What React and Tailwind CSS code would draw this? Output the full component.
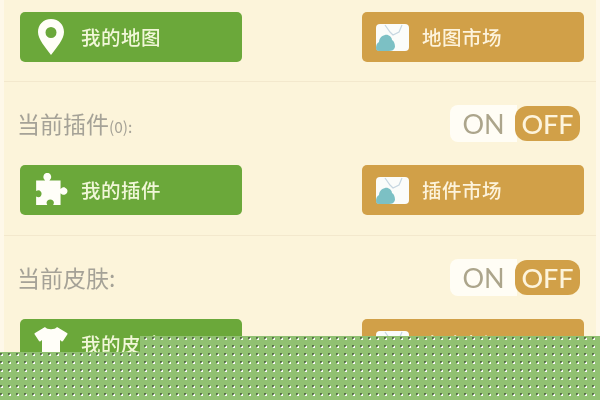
const cjk = "font-['Noto_Sans_CJK_SC','Noto_Sans',sans-serif]";

function Pin() {
  return (
    <svg width="28" height="36" viewBox="0 0 28 36" aria-hidden="true">
      <path fillRule="evenodd" fill="#fffef8" d="M14 0C6 0 1 6 1 13c0 7 7 15 13 23 6-8 13-16 13-23C27 6 22 0 14 0Zm0 8a5.5 5.5 0 1 1 0 11 5.5 5.5 0 0 1 0-11Z" />
    </svg>
  );
}

function Puzzle() {
  return (
    <svg width="34" height="34" viewBox="0 0 32 32" aria-hidden="true">
      <path fill="#fffef8" d="M2 7h8.500c-1.500-1.500-2-3-1.500-4.500C9.800.5 11 0 12.500 0s2.700.5 3.500 2.500c.5 1.500 0 3-1.500 4.500H25v8c1.500-1.500 3-1.800 4.300-1.200 1.600.7 2.200 1.800 2.200 3.200s-.6 2.500-2.200 3.200C28 20.800 26.500 20.500 25 19v11h-7c1-1.500 1-3-.2-4.200-1.300-1.300-3.700-1.300-5 0C11.600 27 11.600 28.500 12.500 30H2v-8c1.600 1 3.300 1 4.300-.2 1.100-1.400 1.100-3.200 0-4.500C5.300 16 3.600 16 2 17Z" />
    </svg>
  );
}

function Shirt() {
  return (
    <svg width="34" height="36" viewBox="0 0 34 36" aria-hidden="true">
      <path fill="#fffef8" d="M11 1C13 4 21 4 23 1l10 6c.6.4.7 1 .3 1.500L29 15c-.4.500-1 .5-1.500.2L26 14v21H8V14l-1.500 1.200c-.5.300-1.100.3-1.500-.2L.7 8.500C.3 8 .4 7.400 1 7Z" />
    </svg>
  );
}

function Market() {
  return (
    <svg width="33" height="27" viewBox="0 0 33 27" aria-hidden="true">
      <rect width="33" height="27" rx="4" fill="#fbfcfa" />
      <path d="M9 1l5 7 3 3 6-3 3-7" fill="none" stroke="#c6d6e0" strokeWidth="1.200" />
      <path d="M0 24c0-3 1-5 3-6 0-3 2-6 6-7 3-1 7 2 7 5 2 1 3 4 3 7-1 3-3 4-6 4H3c-2 0-3-1-3-3Z" fill="#7cc0c4" />
    </svg>
  );
}

function Action({ tone, icon, children }) {
  const color = tone === "green" ? "bg-[#6ba83a] text-[#f1f7d8]" : "bg-[#d1a048] text-[#fdf3dc]";
  const iconBox = tone === "green" ? "w-[61px]" : "w-[60px]";
  return (
    <div className={`flex h-[50px] w-[222px] items-center rounded-[5px] ${color}`}>
      <div className={`flex shrink-0 items-center justify-center ${iconBox}`}>{icon}</div>
      <span className="text-[19.500px] font-medium leading-none tracking-[0.5px]">{children}</span>
    </div>
  );
}

function Buttons({ left, leftIcon, right }) {
  return (
    <div className="flex h-[50px] shrink-0 justify-between pl-4 pr-3">
      <Action tone="green" icon={leftIcon}>{left}</Action>
      <Action tone="gold" icon={<Market />}>{right}</Action>
    </div>
  );
}

function Toggle() {
  return (
    <div className="flex items-center font-['Lato',sans-serif] text-[27px] leading-none">
      <div className="flex h-[37px] w-[67px] items-center justify-center rounded-l-lg bg-[#fffdf5] text-[#aca58b]">ON</div>
      <div className="-ml-[2px] flex h-[35px] w-[65px] items-center justify-center rounded-xl bg-[#d1a048] font-medium text-[#fdf4dc]">OFF</div>
    </div>
  );
}

function Heading({ title, small }) {
  return (
    <div className="flex h-[83px] shrink-0 items-center justify-between pl-[13px] pr-4">
      <div className="flex items-baseline text-[23px] leading-none text-[#a5a297]">
        <span>{title}</span>
        {small ? <span className="text-[15.500px]">{small}</span> : null}
      </div>
      <Toggle />
    </div>
  );
}

function Divider({ className }) {
  return <div className={`h-px shrink-0 bg-[#f3e8cd] ${className}`} />;
}

export default function App() {
  return (
    <div className={`relative h-[400px] w-[600px] overflow-hidden bg-[#fef8e9] px-1 ${cjk}`}>
      <div className="flex h-full flex-col bg-[#fcf4da] pt-3 blur-[0.5px]">
        <Buttons left="我的地图" leftIcon={<Pin />} right="地图市场" />
        <Divider className="mt-[19px]" />
        <Heading title="当前插件" small="(0):" />
        <Buttons left="我的插件" leftIcon={<Puzzle />} right="插件市场" />
        <Divider className="mt-5" />
        <Heading title="当前皮肤:" />
        <Buttons left="我的皮肤" leftIcon={<Shirt />} right="皮肤市场" />
      </div>
      <div className="absolute inset-x-0 top-[336px] bottom-0 bg-[#91c172] bg-[radial-gradient(circle_at_1px_2px,#111_0.6px,transparent_0.8px),radial-gradient(circle_at_2px_3px,#fff_0.7px,transparent_0.9px)] bg-[length:8px_8px] [clip-path:polygon(0_16px,140px_16px,140px_0,100%_0,100%_100%,0_100%)]" />
    </div>
  );
}
